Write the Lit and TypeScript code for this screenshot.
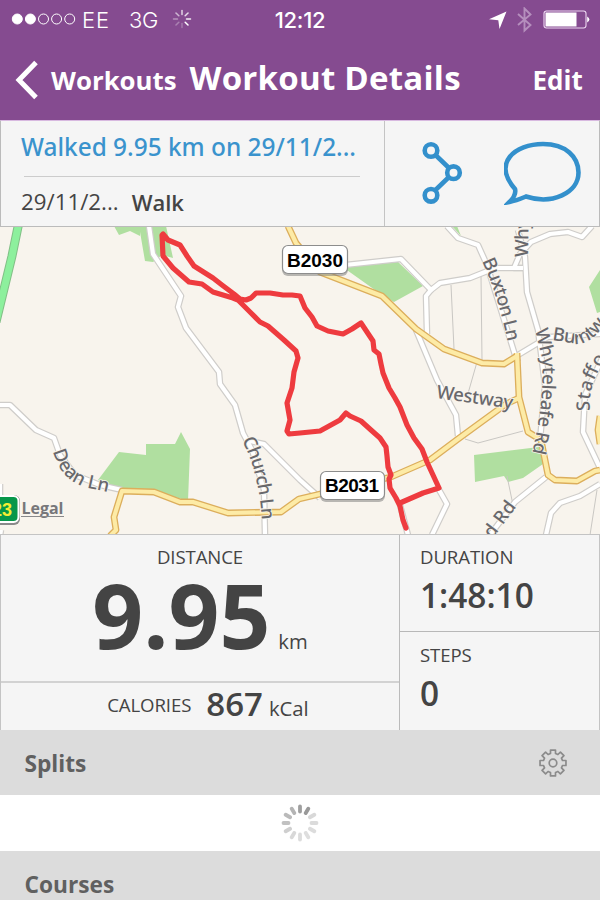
import { LitElement, html, svg, css } from "lit";
import { customElement } from "lit/decorators.js";

const whiteRoads = [
  "M149 226 L153 254 L181 296 L178 307 L186 328 L219 372 L220 384 L235 405 L243 433 L252 450 L264 490 L265 535",
  "M250 441 L264 444 L300 480 L320 498",
  "M345 265 L401 259 L431 290 L440 283 L470 278 L495 268 L523 268",
  "M431 290 L426 296 L427 334",
  "M447 226 L458 238 L478 245 L487 265 L515 355 L518 362",
  "M416 330 L437 380 L456 415 L458 436",
  "M518 230 L525 257 L527 292 L538 330 L545 385 L540 440",
  "M523 268 L514 268 L520 254 L531 242 L550 234 L568 232 L582 237 L592 226",
  "M518 355 L548 337 L600 334",
  "M606 350 L585 395 L583 432 L600 468",
  "M0 405 L10 405 L36 430 L54 438 L60 455 L75 475 L100 485 L122 490",
  "M546 477 L515 502 L490 535",
  "M600 484 L580 496 L560 503 L551 513 L546 535",
  "M438 488 L447 504 L432 535",
  "M400 505 L408 535",
  "M0 484 L0 500 M1 530 L0 536",
];
const thinRoads = [
  "M451 285 L454 349",
  "M481 276 L482 360",
  "M477 362 L467 397",
  "M465 439 L478 443 L523 431",
  "M507 476 L513 505",
  "M597 490 L590 535",
];
const yellowRoads = [
  "M288 226 L296 243 L320 272 L382 296 L416 329 L444 349 L482 363 L504 364 L517 356",
  "M517 353 L519 397 L528 432 L541 440 L548 475 L555 480 L577 481 L595 471 L600 470",
  "M519 398 L506 404 L458 439 L430 460 L391 477 L345 488 L316 495 L299 499 L281 512 L228 513 L193 502 L180 502 L154 492 L122 491 L114 517 L116 530 L110 536",
  "M600 416 L598 430 L600 444",
];
const route =
  "M163 234 L168 240 L180 245 L187 256 L194 266 L213 278 L222 285 L234 294 L240 299 L246 300 L251 298 L256 293 L270 293 L283 295 L292 295 L300 296 L305 308 L312 317 L317 326 L328 331 L343 334 L352 329 L361 323 L367 332 L373 341 L374 350 L379 354 L381 364 L383 373 L389 388 L395 398 L400 407 L407 425 L414 438 L422 449 L427 462 L433 475 L439 488 L423 493 L400 503" +
  " M162 235 L163 256 L173 268 L189 282 L202 284 L213 292 L233 298 L238 300 L250 312 L260 322 L268 326 L284 340 L296 351 L298 358 L294 372 L292 388 L287 403 L290 420 L287 431 L289 434 L300 433 L320 431 L340 420 L346 413 L350 416 L361 421 L371 430 L380 438 L386 447 L387 456 L388 467 L391 475 L389 479 L390 488 L396 498 L400 506 L403 520 L406 528";

const labels = [
  { id: "buxton", d: "M482 261 Q499 298 508 344", text: "Buxton Ln", len: 85 },
  { id: "why", d: "M528 257 L529 190", text: "Why", len: 38 },
  { id: "whyte", d: "M535 330 L542 358 Q545 400 531 458", text: "Whyteleafe Rd", len: 125 },
  { id: "burntwood", d: "M552 340 L578 344 Q592 343 606 323 L640 280", text: "Burntw", len: 62 },
  { id: "stafford", d: "M590 411 Q588 385 604 362 L650 300", text: "Staffo", len: 56 },
  { id: "westway", d: "M436 398 L514 409", text: "Westway", len: 77 },
  { id: "dean", d: "M53 451 C58 470 67 481 85 487 L125 496", text: "Dean Ln", len: 74 },
  { id: "church", d: "M242 440 Q260 475 262 524", text: "Church Ln", len: 83 },
  { id: "lower", d: "M485 549 L526 494", text: "nd Rd", len: 53 },
];

@customElement("route-map")
class RouteMap extends LitElement {
  static styles = css`
    :host { display: block; height: 307px; background: #f8f4ed; overflow: hidden; }
    svg { display: block; }
    .road { fill: none; stroke-linejoin: round; }
    .case { stroke: #cfcdca; stroke-width: 6.6; }
    .core { stroke: #fff; stroke-width: 4.2; }
    .thin { stroke: #c9c7c3; stroke-width: 1; }
    .gold-case { stroke: #dcae5c; stroke-width: 6.8; }
    .gold { stroke: #fdeba6; stroke-width: 4.2; }
    .park { fill: #b0dfa0; }
    .route { fill: none; stroke: #ee3b3f; stroke-width: 5.2; stroke-linejoin: round; stroke-linecap: round; }
    .label { font: 500 18.5px "Noto Sans", "Open Sans", sans-serif; fill: #68686c; stroke: #f8f4ed; stroke-width: 1.6; paint-order: stroke; }
    .legal { font: 700 15.5px "Open Sans", sans-serif; fill: #77777a; }
    .shield { fill: #fff; stroke: #8d8d8d; stroke-width: 1.2; }
    .shadow { fill: #777; opacity: 0.5; }
    .code { font: 700 19px "Liberation Sans", sans-serif; fill: #000; }
    .a-road { fill: #07974a; stroke: #fff; stroke-width: 2; }
    .a-edge { fill: #8a8a8a; }
    .a-code { font: 700 18px "Liberation Sans", sans-serif; fill: #f6ee33; }
  `;
  render() {
    return html`<svg width="600" height="308" viewBox="0 227 600 308">
      <path class="park" d="M139 226 L145 261 L153 262 L162 255 L173 258 L166 226Z M114 226 L119 235 L130 231 L140 236 L140 226Z M344 268 L397 261 L423 286 L394 302 L382 295Z M452 226 L461 236 L457 226Z M600 270 L589 287 L597 313 L600 312Z M98 480 L119 452 L146 455 L146 444 L175 444 L181 432 L190 449 L188 501 L155 491 L120 490Z M474 455 L539 447 L543 464 L523 478 L508 482 L504 476 L475 482Z"/>
      <path d="M19 222 L12 256 L-4 322" fill="none" stroke="#82bf86" stroke-width="9"/>
      <path d="M19 222 L12 256 L-4 322" fill="none" stroke="#8df09d" stroke-width="7"/>
      ${thinRoads.map((d) => svg`<path class="road thin" d=${d} />`)}
      ${whiteRoads.map((d) => svg`<path class="road case" d=${d} />`)}
      ${whiteRoads.map((d) => svg`<path class="road core" d=${d} />`)}
      ${yellowRoads.map((d) => svg`<path class="road gold-case" d=${d} />`)}
      ${yellowRoads.map((d) => svg`<path class="road gold" d=${d} />`)}
      <path class="route" d=${route} />
      ${labels.map((l) => svg`<path id=${l.id} d=${l.d} fill="none" /><text class="label"><textPath href=${"#" + l.id} textLength=${l.len}>${l.text}</textPath></text>`)}
      <rect class="shadow" x="282" y="247" width="66" height="29" rx="6"/>
      <rect class="shield" x="282.5" y="245.5" width="65" height="28" rx="5.5"/>
      <text class="code" x="287" y="266.5" textLength="56">B2030</text>
      <rect class="shadow" x="320" y="473" width="65" height="29" rx="6"/>
      <rect class="shield" x="320.5" y="471.5" width="64" height="28" rx="5.5"/>
      <text class="code" x="325" y="492" textLength="54">B2031</text>
      <rect class="a-edge" x="-20" y="495" width="40" height="30" rx="6"/>
      <rect class="a-road" x="-20" y="496" width="38.5" height="26" rx="5"/>
      <text class="a-code" x="-8" y="516">23</text>
      <text class="legal" x="21.5" y="513.5" textLength="42" lengthAdjust="spacingAndGlyphs">Legal</text>
      <path d="M21 516.5 H64" stroke="#88888a" stroke-width="1"/>
    </svg>`;
  }
}

const spokes = (n: number, inner: number, outer: number, w: number, color: string, alphas: number[]) =>
  Array.from({ length: n }, (_, i) => {
    const a = (i * 2 * Math.PI) / n;
    const s = Math.sin(a), c = -Math.cos(a);
    return svg`<line x1=${s * inner} y1=${c * inner} x2=${s * outer} y2=${c * outer} stroke=${color} stroke-width=${w} stroke-linecap="round" opacity=${alphas[i]} />`;
  });

const gearPath = (() => {
  const pts: string[] = [];
  for (let i = 0; i < 8; i++) {
    const base = (i * Math.PI) / 4;
    for (const [r, a] of [[9.8, -0.26], [13.2, -0.19], [13.2, 0.19], [9.8, 0.26]]) {
      pts.push(`${(Math.sin(base + a) * r).toFixed(2)} ${(-Math.cos(base + a) * r).toFixed(2)}`);
    }
  }
  return "M" + pts.join("L") + "Z";
})();

@customElement("app-root")
class AppRoot extends LitElement {
  static styles = css`
    :host { display: block; width: 600px; height: 900px; overflow: hidden; background: #fff; color: #444; font-family: "Open Sans", sans-serif; }
    * { box-sizing: border-box; }
    svg { display: block; flex: none; }
    .top { height: 120px; background: #854b90; color: #fff; }
    .status { display: grid; grid-template-columns: 1fr auto 1fr; height: 40px; align-items: center; font: 300 22px/40px Inter, sans-serif; }
    .left, .right { display: flex; align-items: center; }
    .left { padding-left: 11px; }
    .carrier { flex: none; margin-left: 6px; width: 30px; font-size: 22px; letter-spacing: 0.8px; }
    .net { flex: none; margin-left: 17px; width: 41px; letter-spacing: -0.3px; }
    .clock { font-weight: 500; font-size: 22px; letter-spacing: -0.3px; }
    .right { justify-content: flex-end; padding-right: 10px; }
    .nav { display: flex; height: 80px; align-items: center; padding-left: 15px; font-weight: 700; white-space: nowrap; }
    .back { font-size: 25.8px; line-height: 76px; width: 126px; margin-left: 12px; }
    .title { font-size: 33px; line-height: 76px; letter-spacing: 0.25px; margin: -4px 0 0 12.5px; width: 272px; }
    .edit { font-size: 26px; line-height: 76px; margin-left: 71px; }
    .summary { display: grid; grid-template-columns: 384px 214px; height: 107px; background: #f5f5f5; border: 1px solid #bbb; border-top-color: #d8b9e0; }
    .info { border-right: 1px solid #c4c4c4; padding: 0 20px; white-space: nowrap; }
    .name { color: #3a93cd; font-family: "Noto Sans", "Open Sans", sans-serif; font-weight: 500; font-size: 24.4px; line-height: 34px; padding-top: 8.5px; height: 55px; }
    .rule { height: 1px; background: #ccc; margin: 0 4px 0 3px; }
    .meta { display: flex; gap: 13px; font-size: 22.3px; line-height: 34px; padding-top: 7.5px; }
    .kind { font-weight: 600; font-size: 22px; }
    .actions { display: flex; align-items: center; padding: 0 0 2px 35.5px; gap: 41.5px; }
    .stats { display: grid; grid-template-columns: 399px 199px; height: 196px; background: #f5f5f5; border: solid #c4c4c4; border-width: 1px 1px 0 1px; }
    .main { border-right: 1px solid #bbb; display: grid; grid-template-rows: 148px 47px; }
    .distance { border-bottom: 2px solid #d2d2d2; text-align: center; }
    .caption { font-size: 18.6px; line-height: 24px; letter-spacing: -0.1px; }
    .distance .caption { padding-top: 10px; }
    .big { display: flex; justify-content: center; align-items: baseline; gap: 8px; line-height: 92px; }
    .value { font-size: 89px; font-weight: 700; }
    .unit { font-size: 20.3px; }
    .calories { display: flex; justify-content: center; align-items: baseline; line-height: 41px; padding-left: 16px; }
    .calories .caption { align-self: flex-start; padding-top: 10px; }
    .kcal { font-weight: 600; font-size: 33px; margin: 0 6px 0 15px; }
    .side { display: grid; grid-template-rows: 96px 99px; }
    .cell { padding: 10px 0 0 20px; }
    .cell + .cell { border-top: 1px solid #b8b8b8; padding-top: 11px; }
    .number { font-size: 33.4px; font-weight: 600; line-height: 53px; }
    .section { display: flex; justify-content: space-between; align-items: center; height: 65px; padding: 1px 32px 0 24.5px; background: #dcdcdc; color: #606060; font-size: 22.7px; font-weight: 700; }
    .loading { height: 56px; display: grid; place-items: center; }
  `;
  render() {
    return html`
      <header class="top">
        <div class="status">
          <div class="left">
            <svg width="65" height="40" fill="none" stroke="#fff" stroke-width="1">
              ${[0, 1, 2, 3, 4].map((i) => svg`<circle cx=${6.3 + i * 13.1} cy="19" r="5" fill=${i < 2 ? "#fff" : "none"} />`)}
            </svg>
            <span class="carrier">EE</span><span class="net">3G</span>
            <svg width="24" height="24" viewBox="-12 -11 24 24">${spokes(8, 4.5, 8.5, 1.5, "#fff", [0.75, 0.8, 0.9, 1, 0.25, 0.3, 0.4, 0.6])}</svg>
          </div>
          <span class="clock">12:12</span>
          <div class="right">
            <svg width="18" height="20" viewBox="0 0 18 20"><path fill="#fff" d="M17.5 1.5 L10.5 19 L9.3 10.3 L0 9.2Z"/></svg>
            <svg width="36" height="26" viewBox="0 0 36 26"><path d="M11 7 L23.5 18 L17.5 23.5 V1.5 L23.5 7.5 L11 18" fill="none" stroke="#b58fbd" stroke-width="1.9"/></svg>
            <svg width="47" height="20" viewBox="0 0 47 20"><rect x="1" y="1" width="42" height="17" rx="2.5" fill="none" stroke="#eed8f2" stroke-width="1.1"/><rect x="2.5" y="2.5" width="31" height="14" fill="#fff"/><path d="M44.2 6.5 Q48.5 9.5 44.2 12.5Z" fill="#fff"/></svg>
          </div>
        </div>
        <nav class="nav">
          <svg width="24" height="40" viewBox="0 0 24 40"><path d="M21 2.5 L4 20 L21 37.5" fill="none" stroke="#fff" stroke-width="5"/></svg>
          <span class="back">Workouts</span><span class="title">Workout Details</span><span class="edit">Edit</span>
        </nav>
      </header>
      <section class="summary">
        <div class="info">
          <div class="name">Walked 9.95 km on 29/11/2...</div>
          <div class="rule"></div>
          <div class="meta"><span>29/11/2...</span><span class="kind">Walk</span></div>
        </div>
        <div class="actions">
          <svg width="42" height="64" viewBox="0 0 42 64" fill="none" stroke="#3390cc" stroke-width="4.6"><path d="M14.5 14 L28 27 M28 36 L14.5 49"/><circle cx="10" cy="9.5" r="6.3"/><circle cx="32.5" cy="31.7" r="6.3"/><circle cx="10" cy="54.3" r="6.3"/></svg>
          <svg width="78" height="64" viewBox="0 0 78 64"><path d="M11 48 C-12 22 11 3 39 3 C62 3 74.5 16 74.5 31.5 C74.5 52 48 64 22 55.5 C16 58 11 60 5.5 61 C9.5 57 12 52 11 48Z" fill="none" stroke="#3390cc" stroke-width="4.6"/></svg>
        </div>
      </section>
      <route-map></route-map>
      <section class="stats">
        <div class="main">
          <div class="distance"><div class="caption">DISTANCE</div><div class="big"><span class="value">9.95</span><span class="unit">km</span></div></div>
          <div class="calories"><span class="caption">CALORIES</span><span class="kcal">867</span><span class="unit">kCal</span></div>
        </div>
        <div class="side">
          <div class="cell"><div class="caption">DURATION</div><div class="number">1:48:10</div></div>
          <div class="cell"><div class="caption">STEPS</div><div class="number">0</div></div>
        </div>
      </section>
      <div class="section"><span>Splits</span>
        <svg width="30" height="30" viewBox="-15 -15 30 30" fill="none" stroke="#8b8b8b" stroke-width="1.7"><path d=${gearPath} stroke-linejoin="round"/><circle r="3.8"/></svg>
      </div>
      <div class="loading"><svg width="40" height="40" viewBox="-20 -20 40 40">${spokes(12, 11.5, 16.5, 3.8, "#777", [0.7, 0.75, 0.28, 0.26, 0.25, 0.24, 0.25, 0.28, 0.35, 0.45, 0.5, 0.55])}</svg></div>
      <div class="section"><span>Courses</span></div>
    `;
  }
}
